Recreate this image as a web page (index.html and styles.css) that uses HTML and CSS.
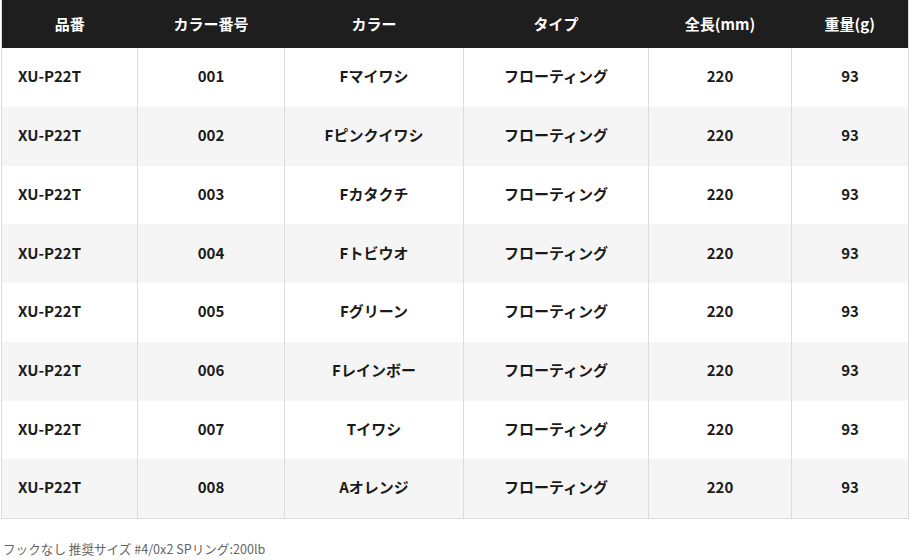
FILE: index.html
```html
<!DOCTYPE html>
<html lang="ja">
<head>
<meta charset="utf-8">
<title>XU-P22T</title>
<link rel="stylesheet" href="styles.css">
</head>
<body>
<div class="wrap">
<table class="spec">
<colgroup>
<col class="c1"><col class="c2"><col class="c3"><col class="c4"><col class="c5"><col class="c6">
</colgroup>
<thead>
<tr><th>品番</th><th>カラー番号</th><th>カラー</th><th>タイプ</th><th>全長(mm)</th><th>重量(g)</th></tr>
</thead>
<tbody>
<tr><td class="name">XU-P22T</td><td>001</td><td>Fマイワシ</td><td>フローティング</td><td>220</td><td>93</td></tr>
<tr><td class="name">XU-P22T</td><td>002</td><td>Fピンクイワシ</td><td>フローティング</td><td>220</td><td>93</td></tr>
<tr><td class="name">XU-P22T</td><td>003</td><td>Fカタクチ</td><td>フローティング</td><td>220</td><td>93</td></tr>
<tr><td class="name">XU-P22T</td><td>004</td><td>Fトビウオ</td><td>フローティング</td><td>220</td><td>93</td></tr>
<tr><td class="name">XU-P22T</td><td>005</td><td>Fグリーン</td><td>フローティング</td><td>220</td><td>93</td></tr>
<tr><td class="name">XU-P22T</td><td>006</td><td>Fレインボー</td><td>フローティング</td><td>220</td><td>93</td></tr>
<tr><td class="name">XU-P22T</td><td>007</td><td>Tイワシ</td><td>フローティング</td><td>220</td><td>93</td></tr>
<tr><td class="name">XU-P22T</td><td>008</td><td>Aオレンジ</td><td>フローティング</td><td>220</td><td>93</td></tr>
</tbody>
</table>
<p class="note">フックなし 推奨サイズ #4/0x2 SPリング:200lb</p>
</div>
</body>
</html>
```
FILE: styles.css
```css
html, body {
  margin: 0;
  padding: 0;
  background: #fff;
}
body {
  font-family: "Noto Sans CJK JP", "Noto Sans", sans-serif;
  color: #1a1a1a;
}
.wrap {
  padding: 0 1px;
}
.spec {
  width: 907px;
  table-layout: fixed;
  border-collapse: collapse;
  border: 1px solid #dcdcdc;
  border-top: none;
}
.c1 { width: 136px; }
.c2 { width: 147px; }
.c3 { width: 179px; }
.c4 { width: 185px; }
.c5 { width: 143px; }
.c6 { width: 117px; }
.spec th {
  background: #1e1e1e;
  color: #fff;
  font-size: 15px;
  font-weight: 700;
  height: 48px;
  padding: 0 0 2px;
  box-sizing: border-box;
  text-align: center;
  vertical-align: middle;
}
.spec td {
  height: 58.75px;
  padding: 0 0 3px;
  font-size: 15px;
  font-weight: 700;
  text-align: center;
  vertical-align: middle;
  border-left: 1px solid #dcdcdc;
  border-right: 1px solid #dcdcdc;
  box-sizing: border-box;
}
.spec td.name {
  text-align: left;
  padding-left: 16px;
}
.spec tbody tr:nth-child(even) td {
  background: #f5f5f5;
}
.note {
  margin: 20px 0 0;
  padding-left: 2px;
  font-size: 12.6px;
  color: #666;
}
```
